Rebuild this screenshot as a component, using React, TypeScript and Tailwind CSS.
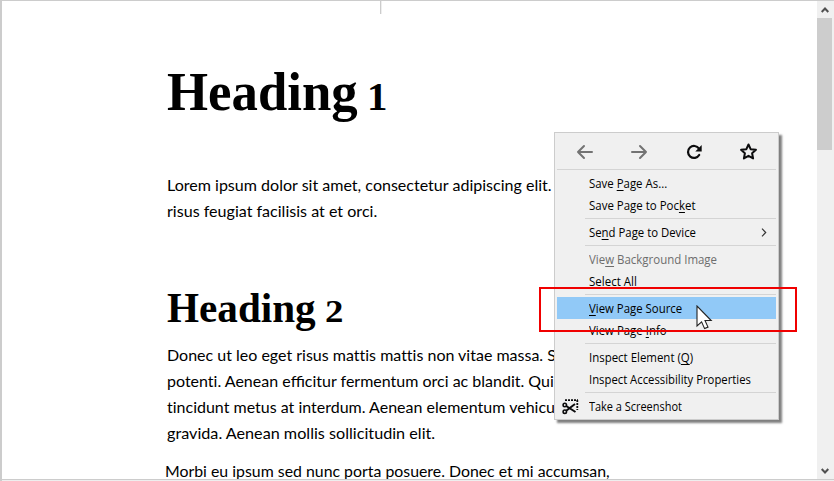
import React from "react";

function Fit({ w, children, size }: { w: number; children: React.ReactNode; size?: string }) {
  const ref = React.useRef<HTMLSpanElement>(null);
  const [scale, setScale] = React.useState(1);
  React.useLayoutEffect(() => {
    if (ref.current) setScale(w / ref.current.offsetWidth);
  }, [w]);
  return (
    <span className="inline-block whitespace-nowrap" style={{ width: w }}>
      <span ref={ref} className={"inline-block origin-left " + (size ?? "")} style={{ transform: `scaleX(${scale})` }}>
        {children}
      </span>
    </span>
  );
}

function Sep({ full }: { full?: boolean }) {
  return (
    <div className={"flex h-[5px] items-center " + (full ? "" : "pl-[28px]")}>
      <div className="h-px w-full bg-[#d4d4d4]" />
    </div>
  );
}

type ItemProps = { w: number; pre?: string; k?: string; post?: string; active?: boolean; muted?: boolean; arrow?: boolean; icon?: React.ReactNode };

function Item({ w, pre, k, post, active, muted, arrow, icon }: ItemProps) {
  return (
    <div className={"flex h-[22px] items-center " + (active ? "bg-[#91c9f7] " : "") + (muted ? "text-[#6d6d6d]" : "text-black")}>
      <div className="flex w-[32px] shrink-0 pl-[5px] pt-px">{icon}</div>
      <div className="flex-1 pt-[2px] leading-[22px]">
        <Fit w={w}>
          {pre}
          {k && <span className="underline decoration-1 underline-offset-2">{k}</span>}
          {post}
        </Fit>
      </div>
      {arrow && (
        <svg className="mr-[9px] mt-px" width="6" height="9" viewBox="0 0 6 9" fill="none" stroke="#333" strokeWidth="1.2">
          <path d="M1 .7 4.7 4.5 1 8.3" />
        </svg>
      )}
    </div>
  );
}

const scissors = (
  <svg width="17" height="16" viewBox="0 0 17 16" fill="none" stroke="#0c0c0d">
    <path d="M3 1.2H16M15.3 1V11" strokeWidth="1.8" strokeDasharray="2 1" />
    <circle cx="2.8" cy="6" r="1.7" strokeWidth="1.6" />
    <circle cx="2.8" cy="12.7" r="1.7" strokeWidth="1.6" />
    <path d="M4.2 7 13.5 13M4.2 11.8 13 5" strokeWidth="2" />
  </svg>
);

function Menu() {
  return (
    <div className="absolute left-[554px] top-[132px] w-[225px] border border-[#cccccc] bg-[#f0f0f0] p-[2px] font-['Open_Sans',sans-serif] text-[12px] shadow-[3px_3px_2px_rgba(0,0,0,0.5)]">
      <div className="flex h-8 items-center pt-px">
        <div className="flex flex-1 justify-center">
          <svg width="17" height="16" viewBox="0 0 17 16" fill="none" stroke="#737373" strokeWidth="2" strokeLinecap="round" strokeLinejoin="round"><path d="M16 8H2M8 2 2 8l6 6" /></svg>
        </div>
        <div className="flex flex-1 justify-center">
          <svg width="17" height="16" viewBox="0 0 17 16" fill="none" stroke="#737373" strokeWidth="2" strokeLinecap="round" strokeLinejoin="round"><path d="M1 8H15M9 2l6 6-6 6" /></svg>
        </div>
        <div className="flex flex-1 justify-center">
          <svg width="16" height="16" viewBox="0 0 16 16"><path d="M13 4.6A6 6 0 1 0 13.2 11" fill="none" stroke="#0c0c0d" strokeWidth="2.2" strokeLinecap="round" /><path d="M15.7 1v6.4H9.3Z" fill="#0c0c0d" /></svg>
        </div>
        <div className="flex flex-1 justify-center">
          <svg width="17" height="17" viewBox="0 0 16 16" fill="none" stroke="#0c0c0d" strokeWidth="1.9" strokeLinejoin="round"><path d="m8 1.4 2 4.4 5 .6-3.6 3.2.9 4.9L8 12.1l-4.3 2.4.9-4.9L1 6.4l5-.6Z" /></svg>
        </div>
      </div>
      <Sep full />
      <Item w={78} pre="Save " k="P" post="age As..." />
      <Item w={106} pre="Save Page to Poc" k="k" post="et" />
      <Sep />
      <Item w={107} pre="Se" k="n" post="d Page to Device" arrow />
      <Sep />
      <Item w={128} pre="Vie" k="w" post=" Background Image" muted />
      <Item w={48} pre="Select All" />
      <Sep />
      <Item w={93} k="V" post="iew Page Source" active />
      <Item w={78} pre="View Page " k="I" post="nfo" />
      <Sep />
      <Item w={104} pre="Inspect Element (" k="Q" post=")" />
      <Item w={162} pre="Inspect Accessibility Properties" />
      <Sep />
      <Item w={93} pre="Take a Screenshot" icon={scissors} />
    </div>
  );
}

export default function App() {
  return (
    <div className="relative flex h-[481px] w-[834px] overflow-hidden border-l-2 border-t border-[#cccccc] bg-white text-black">
      <main className="w-[815px] shrink-0 pl-[165px] font-['Lato',sans-serif] text-[16px] leading-[26px]">
        <h1 className="mt-[56px] flex h-[70px] items-baseline gap-[9px] font-['Liberation_Serif',serif] text-[55px] font-bold leading-[70px]">
          <Fit w={191}>Heading</Fit><Fit w={21} size="text-[41px]">1</Fit>
        </h1>
        <p className="mt-[45px] whitespace-nowrap"><Fit w={385}>Lorem ipsum dolor sit amet, consectetur adipiscing elit.</Fit><br /><Fit w={210}>risus feugiat facilisis at et orci.</Fit></p>
        <h2 className="mt-[59px] flex h-[50px] items-baseline gap-[9px] font-['Liberation_Serif',serif] text-[42px] font-bold leading-[50px]">
          <Fit w={149}>Heading</Fit><Fit w={19} size="text-[31px]">2</Fit>
        </h2>
        <p className="mt-[9px] whitespace-nowrap [font-variant-ligatures:none]">
          Donec ut leo eget risus mattis mattis non vitae massa. S<br />
          potenti. Aenean e<span className="[font-variant-ligatures:normal]">ffi</span>citur fermentum orci ac blandit. Qui<br />
          tincidunt metus at interdum. Aenean elementum vehicu<br />
          <Fit w={268}>gravida. Aenean mollis sollicitudin elit.</Fit>
        </p>
        <p className="-ml-[2px] mt-[12px] whitespace-nowrap"><Fit w={445}>Morbi eu ipsum sed nunc porta posuere. Donec et mi accumsan,</Fit></p>
      </main>
      <aside className="flex w-[17px] shrink-0 flex-col justify-between bg-[#f0f0f0]">
        <div>
          <div className="flex h-[17px] items-center pl-[4px]">
            <svg width="8" height="6" viewBox="0 0 8 6" fill="none" stroke="#505050" strokeWidth="2"><path d="M.7 5 4 1.5 7.3 5" /></svg>
          </div>
          <div className="h-[132px] w-[15px] bg-[#cdcdcd]" />
        </div>
        <div className="flex h-[17px] items-center pb-[3px] pl-[4px]">
          <svg width="8" height="6" viewBox="0 0 8 6" fill="none" stroke="#505050" strokeWidth="2"><path d="M.7 1 4 4.5 7.3 1" /></svg>
        </div>
      </aside>
      <div className="absolute -left-[2px] -top-px h-[481px] w-[834px]">
        <div className="absolute left-[380px] top-0 h-[14px] w-[2px] border-l border-[#cccccc] bg-[#eeeeee]" />
        <div className="absolute left-0 top-[479px] h-[2px] w-full border-t border-[#cccccc] bg-[#eeeeee]" />
        <Menu />
        <div className="absolute left-[539px] top-[287px] h-[45px] w-[258px] border-2 border-[#f00000]" />
        <svg className="absolute left-[696px] top-[305px]" width="17" height="25" viewBox="0 0 17 25"><path d="M1 1v20l4.6-4.2 3 6.8 3.4-1.5-3-6.6h6.2Z" fill="white" stroke="#222" strokeWidth="1.1" /></svg>
      </div>
    </div>
  );
}
